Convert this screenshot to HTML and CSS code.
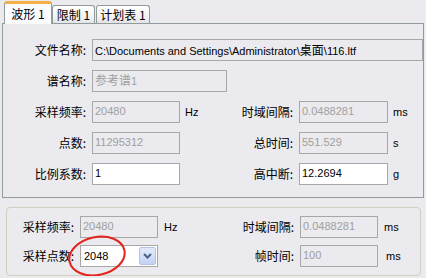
FILE: index.html
```html
<!DOCTYPE html>
<html lang="zh">
<head>
<meta charset="UTF-8">
<title>波形</title>
<link rel="stylesheet" href="styles.css">
</head>
<body>
<div class="tabs">
  <div class="tab active">波形 1</div>
  <div class="tab">限制 1</div>
  <div class="tab wide">计划表 1</div>
</div>

<!-- 波形ページ -->
<div class="page">
  <div class="form">
    <div class="label">文件名称:</div>
    <div class="box full dark">C:\Documents and Settings\Administrator\<span class="cjk">桌面</span>\116.ltf</div>

    <div class="label">谱名称:</div>
    <div class="box name"><span class="cjk">参考谱</span>1</div>

    <div class="label">采样频率:</div>
    <div class="box">20480</div>
    <div class="unit">Hz</div>
    <div class="label">时域间隔:</div>
    <div class="box">0.0488281</div>
    <div class="unit">ms</div>

    <div class="label">点数:</div>
    <div class="box">11295312</div>
    <div class="unit"></div>
    <div class="label">总时间:</div>
    <div class="box">551.529</div>
    <div class="unit">s</div>

    <div class="label">比例系数:</div>
    <div class="box edit">1</div>
    <div class="unit"></div>
    <div class="label">高中断:</div>
    <div class="box edit">12.2694</div>
    <div class="unit">g</div>
  </div>
</div>

<!-- 下の設定グループ -->
<div class="group">
  <div class="form small">
    <div class="label">采样频率:</div>
    <div class="box">20480</div>
    <div class="unit">Hz</div>
    <div class="label">时域间隔:</div>
    <div class="box">0.0488281</div>
    <div class="unit">ms</div>

    <div class="label">采样点数:</div>
    <div class="box edit combo">
      <span>2048</span>
      <span class="drop">
        <svg width="9" height="6" viewBox="0 0 9 6"><path d="M1 1 L4.5 4.5 L8 1" fill="none" stroke="#4d6185" stroke-width="2"/></svg>
      </span>
    </div>
    <div class="unit"></div>
    <div class="label">帧时间:</div>
    <div class="box">100</div>
    <div class="unit">ms</div>
  </div>
  <svg class="mark" width="76" height="48" viewBox="0 0 76 48">
    <ellipse cx="37" cy="23" rx="28" ry="19" transform="rotate(-12 37 23)" fill="none" stroke="#e4231c" stroke-width="2"/>
  </svg>
</div>
</body>
</html>
```
FILE: styles.css
```css
body {
  margin: 0;
  background: #ebeaee;
  font-family: "Liberation Sans", "Noto Sans CJK SC", sans-serif;
  font-size: 11px;
  color: #000;
  overflow: hidden;
}

/* タブ */
.tabs {
  display: flex;
  align-items: flex-end;
  height: 24px;
  padding-left: 4px;
}
.tab {
  width: 41px;
  height: 17px;
  margin-bottom: 1px;
  border: 1px solid #919b9c;
  border-bottom: none;
  border-radius: 3px 3px 0 0;
  background: linear-gradient(#ffffff, #f1f0f2 70%, #e3e2e6);
  font-family: "Noto Sans CJK SC", sans-serif;
  font-size: 12px;
  line-height: 17px;
  text-align: center;
}
.tab.active {
  position: relative;
  z-index: 1;
  width: 46px;
  height: 20px;
  margin-bottom: 0;
  border-top: 3px solid #f4b044;
  background: #fcfcfe;
  line-height: 20px;
}
.tab.wide {
  width: 52px;
  margin-left: 1px;
}

/* ページ */
.page {
  margin: -1px 2px 0;
  height: 158px;
  padding-top: 15px;
  border: 1px solid #919b9c;
}
.form {
  display: grid;
  grid-template-columns: 89px 88px 26px 93px 89px 1fr;
  grid-auto-rows: 22px;
  row-gap: 9px;
}
.label {
  padding-right: 6px;
  text-align: right;
  font-family: "Noto Sans CJK SC", sans-serif;
  font-size: 12px;
  line-height: 22px;
}
.unit {
  padding-left: 5px;
  line-height: 22px;
}
.box {
  border: 1px solid #a7a7a7;
  padding: 2px 0 0 2px;
  color: #a0a0a0;
  line-height: 14px;
  white-space: nowrap;
  overflow: hidden;
}
.box.full {
  grid-column: 2 / -1;
  padding-top: 3px;
}
.box.name {
  grid-column: 2 / -1;
  justify-self: start;
  width: 131px;
}
.box.dark {
  color: #000;
}
.box.edit {
  background: #fff;
  color: #000;
}
.cjk {
  font-family: "Noto Sans CJK SC", sans-serif;
  font-size: 12px;
}

/* グループ */
.group {
  position: relative;
  margin: 9px 5px 0 6px;
  height: 51px;
  padding: 8px 0;
  border: 1px solid #d0d0bf;
  border-radius: 4px;
}
.form.small {
  grid-template-columns: 73px 78px 32px 110px 78px 1fr;
  row-gap: 7px;
}
.form.small .unit {
  padding-left: 6px;
}
.form.small .unit:last-child {
  padding-left: 8px;
}
.combo {
  display: flex;
  justify-content: space-between;
  padding: 0 0 0 3px;
  line-height: 20px;
}
.drop {
  display: flex;
  align-items: center;
  justify-content: center;
  width: 15px;
  margin: 1px 1px 1px 0;
  border: 1px solid #b5c4e6;
  border-radius: 2px;
  background: linear-gradient(#e3eafa, #c3d2f4);
}
.mark {
  position: absolute;
  left: 53px;
  top: 25px;
  overflow: visible;
}
```
